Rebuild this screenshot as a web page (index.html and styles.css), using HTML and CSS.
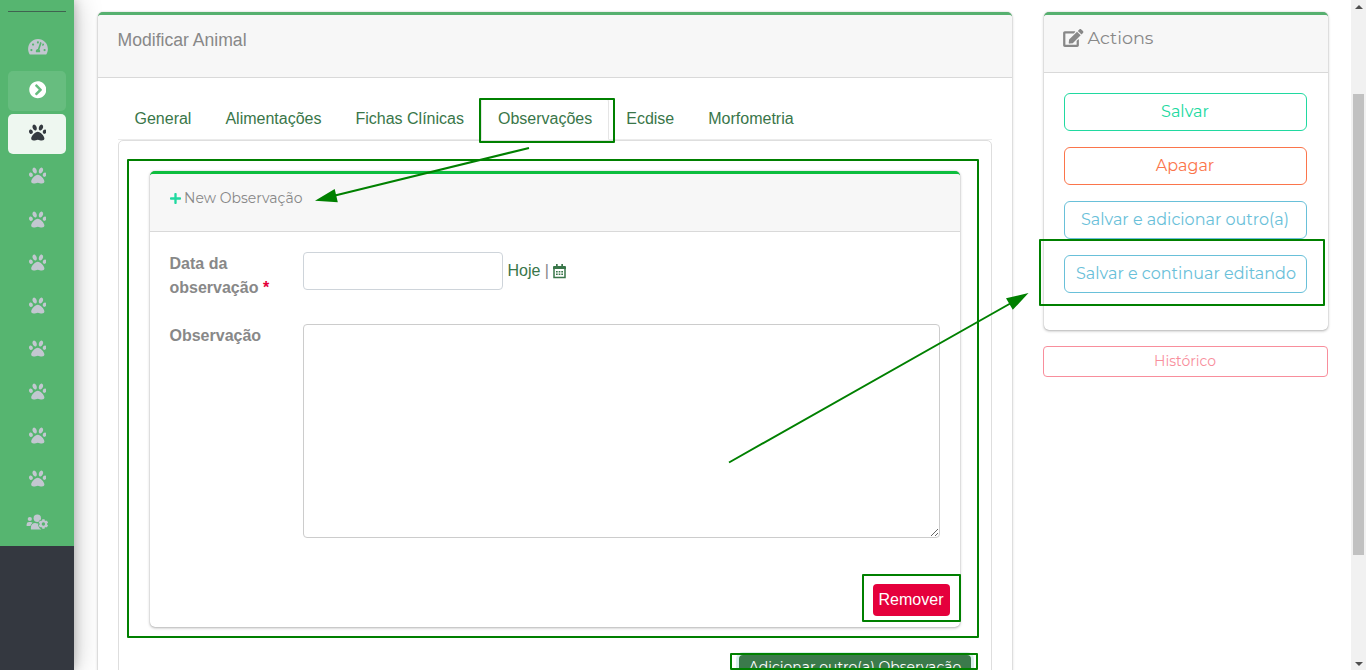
FILE: index.html
```
<!DOCTYPE html>
<html lang="pt">
<head>
<meta charset="utf-8">
<title>Modificar Animal</title>
<link rel="stylesheet" href="styles.css">
</head>
<body>
<svg class="defs" aria-hidden="true">
  <symbol id="paw" viewBox="0 0 512 512"><path d="M256 224c-79.41 0-192 122.76-192 200.25 0 34.9 26.81 55.75 71.74 55.75 48.84 0 81.09-25.08 120.26-25.08 39.51 0 71.85 25.08 120.26 25.08 44.93 0 71.74-20.85 71.74-55.75C448 346.76 335.41 224 256 224zm-147.28-12.61c-10.4-34.65-42.44-57.09-71.56-50.13-29.12 6.96-44.29 40.69-33.89 75.34 10.4 34.65 42.44 57.09 71.56 50.13 29.12-6.96 44.29-40.69 33.89-75.34zm84.72-20.78c30.94-8.14 42.93-53.08 26.77-100.38-16.16-47.3-54.34-79.05-85.28-70.91-30.94 8.14-42.93 53.08-26.77 100.38 16.16 47.3 54.34 79.05 85.28 70.91zm281.39-29.34c-29.12-6.96-61.15 15.48-71.56 50.13-10.4 34.65 4.77 68.38 33.89 75.34 29.12 6.96 61.15-15.48 71.56-50.13 10.4-34.65-4.77-68.38-33.89-75.34zm-156.27 29.34c30.94 8.14 69.12-23.61 85.28-70.91 16.16-47.3 4.17-92.24-26.77-100.38-30.94-8.14-69.12 23.61-85.28 70.91-16.16 47.3-4.17 92.24 26.77 100.38z"/></symbol>
</svg>
<div class="app">
  <nav class="sidebar">
    <div class="menu">
      <a class="item"><svg class="wide" viewBox="0 0 576 512"><path d="M288 32C128.94 32 0 160.94 0 320c0 52.8 14.25 102.26 39.06 144.8 5.61 9.62 16.3 15.2 27.44 15.2h443c11.14 0 21.83-5.58 27.44-15.2C561.75 422.26 576 372.8 576 320c0-159.06-128.94-288-288-288zm0 64c14.71 0 26.58 10.13 30.32 23.65-1.11 2.26-2.64 4.23-3.45 6.67l-9.22 27.67c-5.13 3.49-10.97 6.01-17.64 6.01-17.67 0-32-14.33-32-32S270.33 96 288 96zM96 384c-17.67 0-32-14.33-32-32s14.33-32 32-32 32 14.33 32 32-14.33 32-32 32zm48-160c-17.67 0-32-14.33-32-32s14.33-32 32-32 32 14.33 32 32-14.33 32-32 32zm246.77-72.41l-61.33 184C343.13 347.33 352 364.54 352 384c0 11.72-3.38 22.55-8.88 32H232.88c-5.5-9.45-8.88-20.28-8.88-32 0-33.94 26.5-61.43 59.9-63.59l61.34-184.01c4.17-12.56 17.73-19.45 30.36-15.17 12.57 4.19 19.35 17.79 15.17 30.36zm14.66 57.2l15.52-46.55c3.47-1.29 7.13-2.23 11.05-2.23 17.67 0 32 14.33 32 32s-14.33 32-32 32c-11.38-.01-20.89-6.28-26.57-15.22zM480 384c-17.67 0-32-14.33-32-32s14.33-32 32-32 32 14.33 32 32-14.33 32-32 32z"/></svg></a>
      <a class="item open"><svg viewBox="0 0 512 512"><path d="M256 8c137 0 248 111 248 248S393 504 256 504 8 393 8 256 119 8 256 8zm113.9 231L234.4 103.5c-9.4-9.4-24.6-9.4-33.9 0l-17 17c-9.4 9.4-9.4 24.6 0 33.9L285.1 256 183.5 357.6c-9.4 9.4-9.4 24.6 0 33.9l17 17c9.4 9.4 24.6 9.4 33.9 0L369.9 273c9.4-9.4 9.4-24.6 0-34z"/></svg></a>
      <a class="item current"><svg><use href="#paw"/></svg></a>
      <a class="item"><svg><use href="#paw"/></svg></a>
      <a class="item"><svg><use href="#paw"/></svg></a>
      <a class="item"><svg><use href="#paw"/></svg></a>
      <a class="item"><svg><use href="#paw"/></svg></a>
      <a class="item"><svg><use href="#paw"/></svg></a>
      <a class="item"><svg><use href="#paw"/></svg></a>
      <a class="item"><svg><use href="#paw"/></svg></a>
      <a class="item"><svg><use href="#paw"/></svg></a>
      <a class="item"><svg class="users" viewBox="0 0 23 18"><circle cx="3.8" cy="6" r="2.1"/><circle cx="11.3" cy="5.2" r="3.7"/><path d="M.6 13v-1.7a2.4 2.4 0 0 1 2.4-2.2h1.7c.8 0 1.4.2 1.9.6a6 6 0 0 0-2.2 3.3zM4.9 16.4v-2c0-2.6 1.9-4.3 4.2-4.3 1.2.5 2.4.6 3.6.2a5.5 5.5 0 0 0 2.5 6.1z"/><path class="gear-gap" d="M17.4 5.8v10.4M12.9 8.4l9 5.2M12.9 13.6l9-5.2"/><path class="gear" d="M17.4 6.3v9.4M13.3 8.65l8.2 4.7M13.3 13.35l8.2-4.7"/><circle cx="17.4" cy="11" r="3.8"/><circle class="hole" cx="17.4" cy="11" r="1.7"/></svg></a>
    </div>
  </nav>
  <main class="content">
    <section class="card editor">
      <header class="card-head">Modificar Animal</header>
      <div class="card-body">
        <div class="tabs">
          <a>General</a><a>Alimentações</a><a>Fichas Clínicas</a><a class="active">Observações</a><a>Ecdise</a><a>Morfometria</a>
        </div>
        <div class="pane">
          <section class="card inline">
            <header class="card-head"><svg class="plus" viewBox="0 0 448 512"><path d="M416 208H272V64c0-17.67-14.33-32-32-32h-32c-17.67 0-32 14.33-32 32v144H32c-17.67 0-32 14.33-32 32v32c0 17.67 14.33 32 32 32h144v144c0 17.67 14.33 32 32 32h32c17.67 0 32-14.33 32-32V304h144c17.67 0 32-14.33 32-32v-32c0-17.67-14.33-32-32-32z"/></svg><span class="title-new">New Observação</span></header>
            <div class="form">
              <div class="row date">
                <label>Data da observação <b class="required">*</b></label>
                <input type="text"><span class="shortcuts"><a>Hoje</a> | <svg viewBox="0 0 13 15"><path class="frame" d="M1 4h11v9.500H1z"/><path d="M1 2h11q1 0 1 1v2H0V3q0-1 1-1zM3 0h1.700v3H3zM8.300 0H10v3H8.300zM3 7h1.700v1.500H3zM5.650 7h1.700v1.500h-1.700zM8.300 7H10v1.500H8.300zM3 9.500h1.700V11H3zM5.650 9.500h1.700V11h-1.700zM8.300 9.500H10V11H8.300z"/></svg></span>
              </div>
              <div class="row">
                <label>Observação</label>
                <textarea></textarea>
              </div>
              <div class="remove-row"><button class="remove">Remover</button></div>
            </div>
          </section>
          <div class="add-row"><button class="add"><span>Adicionar outro(a) Observação</span></button></div>
        </div>
      </div>
    </section>
    <aside class="side">
      <section class="card actions">
        <header class="card-head"><svg class="edit" viewBox="0 0 576 512"><path d="M402.6 83.2l90.2 90.2c3.8 3.8 3.8 10 0 13.8L274.4 405.6l-92.8 10.3c-12.4 1.4-22.9-9.1-21.5-21.5l10.3-92.8L388.8 83.2c3.8-3.8 10-3.8 13.8 0zm162-22.9l-48.8-48.8c-15.2-15.2-39.9-15.2-55.2 0l-35.4 35.4c-3.8 3.8-3.8 10 0 13.8l90.2 90.2c3.8 3.8 10 3.8 13.8 0l35.4-35.4c15.2-15.3 15.2-40 0-55.2zM384 346.2V448H64V128h229.8c3.2 0 6.2-1.3 8.5-3.5l40-40c7.6-7.6 2.2-20.5-8.5-20.5H48C21.5 64 0 85.5 0 112v352c0 26.5 21.5 48 48 48h352c26.5 0 48-21.5 48-48V306.2c0-10.7-12.9-16-20.5-8.5l-40 40c-2.2 2.3-3.5 5.3-3.5 8.5z"/></svg><span class="title-actions">Actions</span></header>
        <div class="buttons">
          <button class="save"><span>Salvar</span></button>
          <button class="delete"><span>Apagar</span></button>
          <button class="info"><span>Salvar e adicionar outro(a)</span></button>
          <button class="info continue"><span>Salvar e continuar editando</span></button>
        </div>
      </section>
      <button class="history"><span>Histórico</span></button>
    </aside>
  </main>
  <div class="scrollbar"><i class="up"></i><div class="thumb"></div><i class="down"></i></div>
</div>
<svg class="annotations" viewBox="0 0 1366 670">
  <g class="marks">
    <rect x="480" y="99" width="134" height="43"/>
    <rect x="128" y="160" width="850" height="477"/>
    <rect x="863" y="575" width="97" height="46"/>
    <rect x="731" y="654" width="246" height="15"/>
    <rect x="1040" y="240" width="284" height="65"/>
    <path d="M529 148L335 195.5M729 462.5L1012 302.5"/>
  </g>
  <path class="tip" d="M315 200.7L334.7 189L337.8 202.2zM1028.5 293L1006 298.2L1012.8 309.8z"/>
</svg>
</body>
</html>
```
FILE: styles.css
```
* { box-sizing: border-box; }
body { margin: 0; background: #fff; color: #888; font: 16px/24px "Liberation Sans", Arial, sans-serif; overflow: hidden; }
button { font: inherit; display: block; padding: 0; white-space: nowrap; background: #fff; }
.defs { display: none; }
.app { display: flex; width: 1366px; height: 670px; overflow: hidden; }

.sidebar { width: 74px; flex: none; background: #343840; box-shadow: 0 0 28px rgba(0,0,0,.25), 0 0 10px rgba(0,0,0,.22); }
.menu { height: 546px; padding: 27px 8px 0; background: #56b570; display: flex; flex-direction: column; gap: 3.2px; }
.menu::before { content: ""; height: 1px; margin: -16px 0 12px; background: #3f6350; flex: none; }
.item { height: 40px; flex: none; border-radius: 5px; display: flex; align-items: center; justify-content: center; color: #c2c7d0; }
.item svg { width: 17.6px; height: 17.6px; fill: currentColor; margin: -2px 0 0 1px; }
.item svg.wide { width: 20px; height: 17.6px; margin-top: -1px; }
.item svg.users { width: 23px; height: 18px; margin-top: -1px; }
.item.open { background: #67bd7f; color: #fff; margin: .5px 0 -.5px; }
.item.current { background: #eef7f0; color: #343a40; }
.item.current + .item { margin-top: .5px; }
.item:last-child { margin-top: -.5px; }
.gear { stroke: #c2c7d0; stroke-width: 2.4; }
.gear-gap { stroke: #56b570; stroke-width: 4; }
.hole { fill: #56b570; }

.content { flex: 1; display: flex; gap: 30.5px; padding: 12px 23px 0; align-items: flex-start; }
.card { background: #fff; border-top: 3px solid #56b06f; border-radius: 5px; box-shadow: 0 0 1px rgba(0,0,0,.25), 0 1px 3px rgba(0,0,0,.3); }
.card-head { background: #f7f7f7; border-bottom: 1px solid #d9d9d9; padding: 12px 20px; border-radius: 3px 3px 0 0; }
.editor { width: 914.5px; height: 760px; flex: none; margin-left: .5px; }
.editor > .card-head { height: 63px; padding: 13px 20px; font-size: 17.6px; }
.card-body { padding: 20px; }
.tabs { display: flex; height: 42px; border-bottom: 1px solid #ebebeb; }
.tabs a { height: 42px; padding: 8px 16px; border: 1px solid transparent; border-radius: 4px 4px 0 0; color: #397649; white-space: nowrap; }
.tabs a.active { border-color: #e5e5e5 #e5e5e5 #fff; }
.pane { height: 600px; border: 1px solid #dedede; border-radius: 5px 5px 0 0; padding: 30px; }
.inline { height: 455.5px; border-top-color: #0dbe3e; margin: 0 0 .5px 1px; width: 810.5px; }
.inline .card-head { height: 58px; display: flex; align-items: flex-start; }
.plus { width: 11px; height: 13px; fill: #20d9a0; margin: 6px 3.5px 0 0; }
.title-new, .title-actions, .buttons span, .history span, .add span { font-family: Montserrat, Inter, sans-serif; font-weight: 400; }
.title-new { font-size: 14px; }
.form { padding: 20px; }
.row { display: flex; align-items: flex-start; }
.row label { width: 114px; margin-right: 19px; flex: none; font-weight: bold; }
.required { color: #e4003a; }
.date { height: 72px; }
input, textarea { display: block; margin: 0; border: 1px solid #ced4da; border-radius: 4px; background: #fff; }
input { width: 200px; height: 38px; }
textarea { width: 637px; height: 214px; resize: vertical; border-color: #ccc; }
.shortcuts { margin: 7px 0 0 5px; white-space: pre; }
.shortcuts a { color: #397649; }
.shortcuts svg { width: 13px; height: 15px; fill: #397649; vertical-align: -3px; margin-left: -.5px; }
.shortcuts .frame { fill: none; stroke: #397649; stroke-width: 1.5; }
.remove-row { display: flex; justify-content: flex-end; margin: 46px -9.5px 0 0; }
.remove { width: 77px; height: 32px; border: 0; border-radius: 4px; color: #fff; background: #e5003c; }
.add-row { display: flex; justify-content: flex-end; margin: 28px -10px 0 0; }
.add { width: 232px; height: 31px; border: 0; border-radius: 4px; background: #3b7a4b; color: #fff; box-shadow: 0 0 0 3px #d8efeb; line-height: 23px; padding-bottom: 6px; }
.add span { font-size: 14px; }

.side { width: 285px; flex: none; }
.actions { width: 284px; height: 317.5px; margin: 0 0 16.5px 1px; }
.actions .card-head { height: 58px; padding: 11px 20px; display: flex; }
.edit { width: 20.5px; height: 18px; fill: #888; margin: 3px 4px 0 -.5px; }
.title-actions { font-size: 17.6px; }
.buttons { padding: 20px 21px 20px 20px; display: flex; flex-direction: column; gap: 16px; }
.buttons button { height: 38px; border: 1px solid; border-radius: 6px; }
.buttons span { font-size: 16px; }
.save { color: #20d9a0; }
.delete { color: #fb754b; }
.info { color: #69c0d9; }
.buttons .continue { padding-left: 2px; }
.history { width: 285px; height: 31px; border: 1px solid #f88e9c; border-radius: 4px; color: #f88e9c; padding-bottom: 2px; }
.history span { font-size: 14px; }

.scrollbar { width: 15px; flex: none; background: #f1f1f1; display: flex; flex-direction: column; align-items: center; padding: 5px 2px 4px; }
.thumb { width: 11px; height: 461px; margin-top: 85px; background: #c1c1c1; }
.up, .down { width: 0; height: 0; border: 4px solid transparent; }
.up { border-top: 0; border-bottom-color: #505050; }
.down { border-bottom: 0; border-top-color: #505050; margin-top: auto; }

.annotations { position: absolute; inset: 0; width: 1366px; height: 670px; pointer-events: none; }
.marks { fill: none; stroke: #008000; stroke-width: 2; stroke-linejoin: round; }
.tip { fill: #008000; }
```
